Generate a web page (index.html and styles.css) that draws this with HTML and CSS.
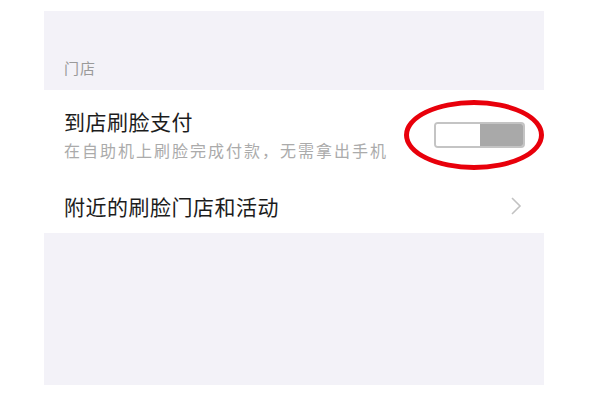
FILE: index.html
```html
<!DOCTYPE HTML>
<html>
<head>
    <meta charset="utf-8">
    <title>门店</title>
    <link rel="stylesheet" href="styles.css">
</head>
<body>
<div class="screen">
    <div class="group-head">
        <span class="group-title">门店</span>
    </div>
    <div class="list">
        <div class="cell cell-switch">
            <div class="cell-text">
                <div class="cell-title">到店刷脸支付</div>
                <div class="cell-desc">在自助机上刷脸完成付款，无需拿出手机</div>
            </div>
            <div class="switch-wrap">
                <div class="switch">
                    <span class="switch-off"></span>
                    <span class="switch-on"></span>
                </div>
                <span class="mark"></span>
            </div>
        </div>
        <div class="cell cell-link">
            <div class="cell-title">附近的刷脸门店和活动</div>
            <svg class="arrow" width="12" height="20" viewBox="0 0 12 20">
                <path d="M2 2 L10 10 L2 18" fill="none" stroke="#c2c2c2" stroke-width="1.6"/>
            </svg>
        </div>
    </div>
    <div class="footer"></div>
</div>
</body>
</html>
```

FILE: styles.css
```css
body {
    margin: 0;
    background-color: #fff;
    font-family: "Noto Sans CJK SC", "Noto Sans", sans-serif;
}
.screen {
    width: 500px;
    margin-left: 44px;
    padding-top: 11px;
}
.group-head {
    height: 79px;
    background-color: #f3f2f8;
    display: flex;
    align-items: flex-end;
    padding-left: 20px;
    box-sizing: border-box;
}
.group-title {
    font-size: 15px;
    letter-spacing: 1px;
    color: #9a9a9a;
    line-height: 20px;
    margin-bottom: 12px;
}
.list {
    background-color: #fff;
}
.cell {
    display: flex;
    align-items: center;
    justify-content: space-between;
    padding: 0 20px;
}
.cell-switch {
    height: 88px;
}
.cell-link {
    height: 55px;
    padding-right: 22px;
}
.cell-title {
    font-size: 21px;
    letter-spacing: 0.5px;
    color: #1c1c1c;
    line-height: 28px;
}
.cell-desc {
    font-size: 16px;
    letter-spacing: 2px;
    color: #ababab;
    line-height: 22px;
    margin-top: 4px;
}
.switch-wrap {
    position: relative;
    margin-right: -1px;
    margin-top: 2px;
}
.switch {
    width: 91px;
    height: 26px;
    border: 2px solid #c4c4c4;
    border-radius: 4px;
    box-sizing: border-box;
    display: flex;
    overflow: hidden;
}
.switch-off {
    flex: 1;
    background-color: #fff;
}
.switch-on {
    flex: 1;
    background-color: #a9a9a9;
}
.mark {
    position: absolute;
    left: -30px;
    top: -22px;
    width: 130px;
    height: 60px;
    border: 5px solid #e8000b;
    border-radius: 50%;
}
.footer {
    height: 152px;
    background-color: #f3f2f8;
}
```
